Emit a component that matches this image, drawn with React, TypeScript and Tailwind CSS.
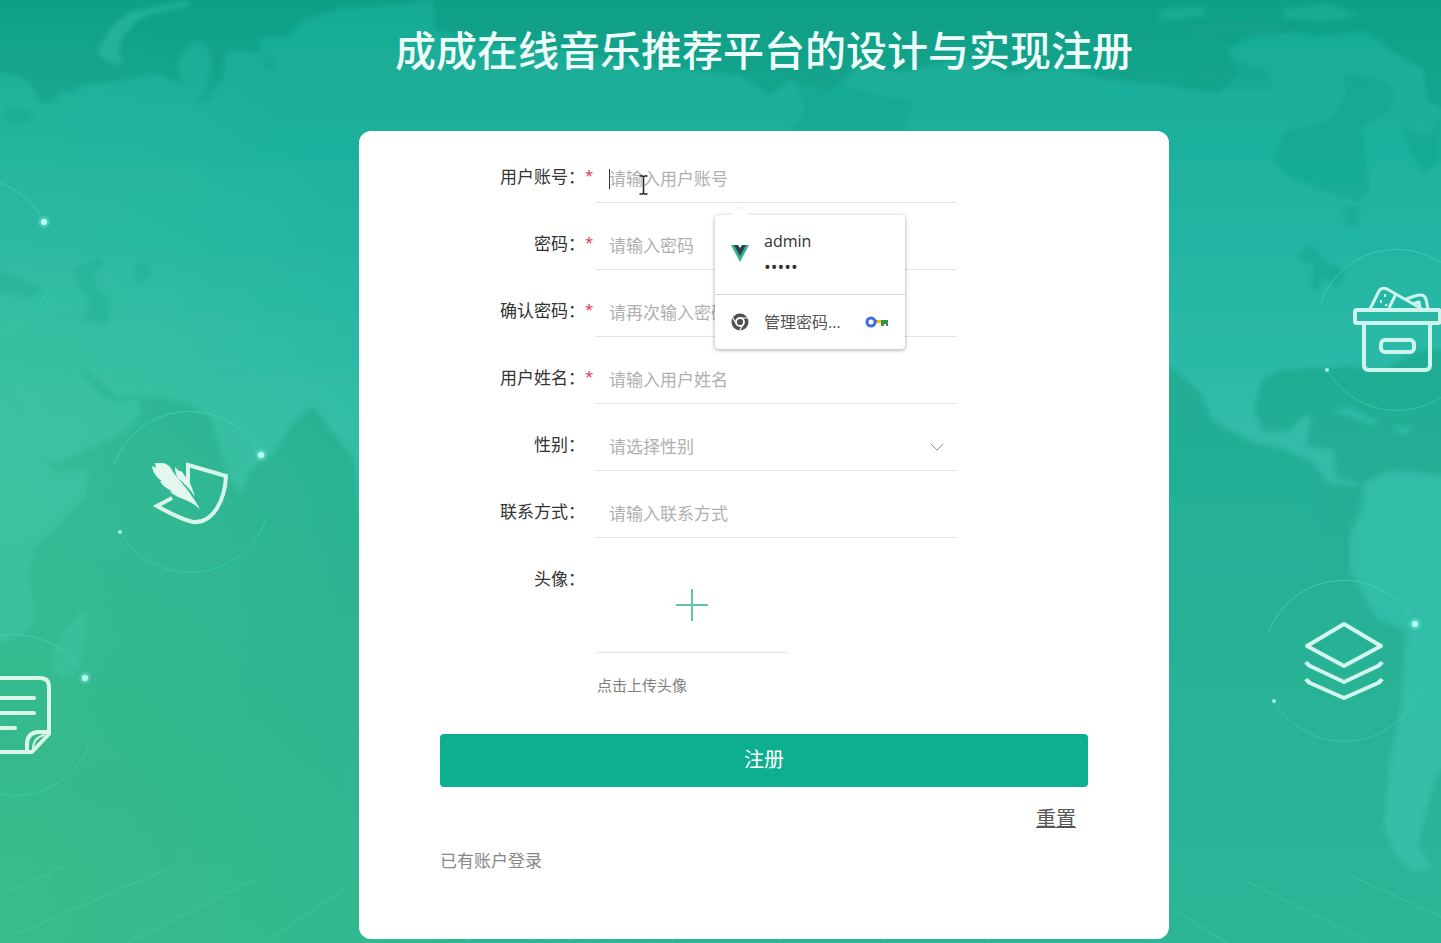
import { useState } from 'react'
import type { FormEvent } from 'react'
import { ChevronDown } from 'lucide-react'

type Field = {
  id: string
  label: string
  placeholder: string
  type: 'text' | 'password' | 'select'
  required?: boolean
  options?: string[]
}

const fields: Field[] = [
  { id: 'account', label: '用户账号', placeholder: '请输入用户账号', type: 'text', required: true },
  { id: 'password', label: '密码', placeholder: '请输入密码', type: 'password', required: true },
  { id: 'password2', label: '确认密码', placeholder: '请再次输入密码', type: 'password', required: true },
  { id: 'name', label: '用户姓名', placeholder: '请输入用户姓名', type: 'text', required: true },
  { id: 'gender', label: '性别', placeholder: '请选择性别', type: 'select', options: ['男', '女'] },
  { id: 'phone', label: '联系方式', placeholder: '请输入联系方式', type: 'text' },
]

const rings = [
  { cx: -27, cy: 259 },
  { cx: 190, cy: 492 },
  { cx: 14, cy: 715 },
  { cx: 1397, cy: 330 },
  { cx: 1344, cy: 661 },
]

function Ring({ cx, cy }: { cx: number; cy: number }) {
  return (
    <g transform={`translate(${cx} ${cy})`}>
      <path d="M-76 -28A81 81 0 0 1 67 -45" fill="none" stroke="#3fd6b4" strokeOpacity=".75" />
      <path d="M-70 40A81 81 0 0 0 76 28" fill="none" stroke="#34d3a2" strokeOpacity=".75" />
      <circle cx="71" cy="-37" r="7" fill="url(#glow)" />
      <circle cx="71" cy="-37" r="3" fill="#b9fff4" />
      <circle cx="-70" cy="40" r="2" fill="#9df7e2" />
    </g>
  )
}

// world map, rings and line icons behind the form
function Backdrop() {
  return (
    <svg
      aria-hidden="true"
      className="absolute inset-0 w-full h-full"
      viewBox="0 0 1441 943"
      preserveAspectRatio="xMidYMid slice"
    >
      <defs>
        <linearGradient id="sea" gradientUnits="userSpaceOnUse" x1="0" y1="0" x2="0" y2="943">
          <stop offset="0" stopColor="#0f9f87" />
          <stop offset=".15" stopColor="#17a68f" />
          <stop offset=".5" stopColor="#24af95" />
          <stop offset="1" stopColor="#2cb597" />
        </linearGradient>
        <linearGradient id="land" gradientUnits="userSpaceOnUse" x1="0" y1="0" x2="0" y2="943">
          <stop offset="0" stopColor="#17aa94" />
          <stop offset=".1" stopColor="#1caf9b" />
          <stop offset=".25" stopColor="#23b4a2" />
          <stop offset=".45" stopColor="#30bca9" />
          <stop offset="1" stopColor="#36c0a8" />
        </linearGradient>
        <radialGradient id="warm" gradientUnits="userSpaceOnUse" cx="0" cy="900" r="700">
          <stop offset="0" stopColor="#48c27c" stopOpacity=".5" />
          <stop offset="1" stopColor="#48c27c" stopOpacity="0" />
        </radialGradient>
        <radialGradient id="warmTop" gradientUnits="userSpaceOnUse" cx="0" cy="400" r="400">
          <stop offset="0" stopColor="#48cba0" stopOpacity=".4" />
          <stop offset="1" stopColor="#48cba0" stopOpacity="0" />
        </radialGradient>
        <radialGradient id="glow">
          <stop offset="0" stopColor="#8ffff0" stopOpacity=".7" />
          <stop offset="1" stopColor="#8ffff0" stopOpacity="0" />
        </radialGradient>
        <filter id="soft">
          <feGaussianBlur stdDeviation="2.5" />
        </filter>
      </defs>

      <rect width="1441" height="943" fill="url(#sea)" />

      <g filter="url(#soft)">
        <path
          fill="url(#land)"
          d="M-9 73L20 76L34 88L38 102L55 102L60 88L68 94L85 84L120 82L146 74L160 75L184 85L176 62L190 42L206 42L212 60L213 88L222 80L226 50L262 52L256 38L290 35L302 20L340 8L400 5L432 0L436 30L480 42L560 50L640 66L740 75L770 95L790 80L830 90L860 66L900 72L960 60L1010 74L1060 68L1100 78L1180 88L1180 540L362 540L354 460L332 432L313 406L292 424L272 455L250 470L240 494L226 470L212 420L190 404L165 398L140 396L118 396L104 384L92 376L84 368L78 368L92 384L106 398L118 402L138 398L140 414L124 432L58 464L46 456L10 392L-9 370Z"
        />
        <path fill="url(#land)" d="M-9 376L12 398L44 452L54 472L90 468L84 498L58 526L34 548L28 574L34 606L33 626L10 640L-9 652Z" />
        <path fill="url(#land)" fillOpacity=".8" d="M86 606L88 624L80 664L68 680L54 672L53 652L62 632Z" />
        <path fill="#29b89e" fillOpacity=".7" d="M110 64L96 52L112 26L130 12L170 4L190 0L188 6L156 13L138 20L122 38L118 52L124 64Z" />
        <path
          fill="url(#sea)"
          d="M1160 350L1200 392L1212 420L1252 442L1286 450L1312 462L1320 560L1160 560Z"
        />
        <path
          fill="url(#land)"
          d="M1150 82L1190 90L1220 92L1240 72L1226 50L1250 36L1290 32L1320 36L1368 32L1390 50L1424 70L1426 100L1450 112L1450 350L1420 350L1380 372L1352 366L1280 370L1262 380L1254 410L1264 432L1290 430L1306 414L1312 418L1306 446L1334 450L1336 478L1362 484L1390 470L1450 476L1450 760L1436 776L1426 812L1418 844L1432 868L1412 872L1394 852L1384 826L1390 760L1400 712L1406 630L1376 618L1350 570L1350 536L1362 508L1364 486L1330 484L1312 462L1286 450L1252 442L1212 420L1200 392L1150 350Z"
        />
        {/* lakes and inner seas */}
        <g fill="#12a189" fillOpacity=".45">
          <path d="M1344 74L1380 80L1396 94L1388 112L1362 126L1370 190L1358 202L1320 190L1290 178L1272 160L1284 132L1330 120L1346 96Z" />
          <path d="M1340 206L1358 206L1358 222L1350 228Z" />
          <path d="M1296 256L1312 244L1326 262L1346 270L1338 290L1324 276L1318 290L1310 292L1314 266Z" />
          <path d="M1400 128L1430 136L1441 110L1441 160L1424 174L1410 150Z" />
          <path d="M1170 30L1230 20L1300 26L1290 36L1230 30L1210 40Z" />
          <path d="M1190 76L1230 58L1270 72L1272 90L1230 88Z" />
          <path d="M790 66L840 84L880 96L914 100L904 134L790 134L806 110Z" />
          <path d="M206 84L214 44L224 40L218 84L208 104L196 102Z" />
          <path d="M262 58L274 56L274 72L266 70Z" />
          <path d="M72 270L100 256L104 266L92 276L100 292L110 296L108 324L84 322L88 300L76 282Z" />
          <path d="M136 264L148 262L150 274L142 284L134 276Z" />
          <path d="M-9 270L18 276L42 288L34 298L-9 292Z" />
          <path d="M4 108L30 110L32 120L18 126L6 120Z" />
        </g>
        <g fill="url(#land)">
          <path d="M1330 410L1350 408L1376 420L1378 426L1360 420Z" />
          <path d="M1392 426L1412 428L1404 436Z" />
        </g>
        <g fill="#1fb29c" fillOpacity=".6">
          <path d="M1160 10L1204 6L1206 16L1160 22Z" />
          <path d="M1284 8L1330 4L1360 16L1320 22L1284 18Z" />
        </g>
      </g>

      <rect width="1441" height="943" fill="url(#warm)" />
      <rect width="1441" height="943" fill="url(#warmTop)" />

      <g fill="none" stroke="#4bdba2" strokeOpacity=".45">
        <path d="M0 941L167 869M127 943L253 880M267 941L347 887M0 895L66 866" />
        <path d="M1170 907L1227 943M1243 879L1370 942M1347 874L1441 917" />
        <path d="M466 943L470 937M568 943L572 937M673 943V937M780 943V937M886 943L882 937M990 943L986 937" />
      </g>

      {rings.map(r => <Ring key={`${r.cx}-${r.cy}`} cx={r.cx} cy={r.cy} />)}

      {/* quill on a page */}
      <g>
        <path
          d="M188 483L188 465L226 476C225 500 213 524 193 522C180 519 168 512 157 506L172 498"
          fill="none"
          stroke="#d8f5e9"
          strokeWidth="4"
        />
        <path
          d="M200 509C193 503 188 501 183 499C178 497 174 495 170 492L172 491C167 489 162 485 160 481L162 481C157 478 153 473 152 466L156 468L155 463L163 463C168 464 171 467 173 472C180 481 190 491 200 509Z"
          fill="#e2f8ef"
        />
        <path d="M195 497C190 489 184 483 178 478C176 475 175 472 175 467L179 471L181 471C184 474 185 476 186 478L187 478C191 484 193 490 195 497Z" fill="#e2f8ef" />
      </g>

      {/* note with folded corner */}
      <g fill="none" stroke="#d8f7e6" strokeWidth="4" strokeLinecap="round" strokeLinejoin="round">
        <path d="M-10 678H40Q49 678 49 687V734L32 752H-10" />
        <path d="M-10 698H34M-10 713H34M-10 728H15" />
        <path d="M48 732H38Q27 733 27 744V751" />
        <path d="M33 749Q33 738 44 735" strokeWidth="2" />
      </g>

      {/* archive box */}
      <g fill="none" stroke="#cdf5ee" strokeWidth="4" strokeLinejoin="round">
        <rect x="1355" y="310" width="85" height="13" rx="2" />
        <path d="M1364 324V365Q1364 370 1369 370H1425Q1430 370 1430 365V324" />
        <rect x="1381" y="340" width="33" height="12" rx="4" />
        <path d="M1370 309L1379 291Q1382 287 1387 289L1422 309M1389 308L1396 294" strokeWidth="3" />
        <path d="M1406 299L1415 296Q1424 293 1426 299L1428 309M1413 304L1419 302L1420 308" strokeWidth="3" />
        <path d="M1385 294v3M1381 300v3M1386 304v2" strokeWidth="2" />
      </g>

      {/* layers */}
      <g fill="none" stroke="#d2f6ee" strokeWidth="4" strokeLinejoin="round">
        <path d="M1344 624L1381 646L1344 666L1307 646Z" />
        <path d="M1306 662Q1307 664 1310 666L1344 682L1378 666Q1381 664 1382 662" />
        <path d="M1306 679Q1307 681 1310 683L1344 698L1378 683Q1381 681 1382 679" />
      </g>
    </svg>
  )
}

function VueLogo() {
  return (
    <svg width="18" height="18" viewBox="0 0 18 18" aria-hidden="true">
      <path d="M0 0H4L9 8L14 0H18L9 17Z" fill="#35b48a" />
      <path d="M3 0H7L9 3L11 0H15L9 11Z" fill="#2b4055" />
    </svg>
  )
}

function ChromeLogo() {
  return (
    <svg width="18" height="18" viewBox="0 0 18 18" aria-hidden="true">
      <circle cx="9" cy="9" r="8.500" fill="#505050" />
      <path d="M9 5H17M5.500 11L1.500 4.500M12.500 11L8.500 17.500" stroke="#fff" strokeWidth="1.200" />
      <circle cx="9" cy="9" r="4" fill="#505050" stroke="#fff" strokeWidth="1.800" />
    </svg>
  )
}

function KeyLogo() {
  return (
    <svg width="24" height="12" viewBox="0 0 24 12" aria-hidden="true">
      <path d="M9 4H12V7H9Z" fill="#ea4335" />
      <path d="M12 4H17V7H12Z" fill="#fbbc04" />
      <path d="M16 4H23V10H21V8H19V10H16Z" fill="#34934a" />
      <circle cx="6" cy="6" r="4" fill="#fff" stroke="#3b6fe0" strokeWidth="3" />
    </svg>
  )
}

function PasswordPopup() {
  return (
    <div className="absolute left-[120px] top-[60px] z-10 w-[190px] rounded bg-white shadow-[0_1px_4px_rgba(0,0,0,0.35)]">
      <svg className="absolute -top-2 left-[15px]" width="20" height="9" viewBox="0 0 20 9" aria-hidden="true">
        <path d="M0 9L8 1Q10 0 12 1L20 9Z" fill="#fff" stroke="#f0f0f0" />
        <path d="M1 9H19" stroke="#fff" strokeWidth="2" />
      </svg>
      <button type="button" className="flex h-20 w-full items-center gap-[15px] border-b border-[#d4d4d4] pb-0.5 pl-4 text-left">
        <VueLogo />
        <span className="flex flex-col text-[#333]">
          <span className="text-base leading-[26px]">admin</span>
          <span className="text-lg leading-[26px]">•••••</span>
        </span>
      </button>
      <button type="button" className="flex h-[54px] w-full items-center gap-[15px] pl-4 pr-4 text-left">
        <ChromeLogo />
        <span className="flex-1 text-base text-[#555]">管理密码...</span>
        <KeyLogo />
      </button>
    </div>
  )
}

function TextCursor() {
  return (
    <svg className="absolute left-11 top-5 pointer-events-none" width="9" height="20" viewBox="0 0 9 20" aria-hidden="true">
      <path d="M0.500 1H3.500L4.500 2L5.500 1H8.500M4.500 2V18M0.500 19H3.500L4.500 18L5.500 19H8.500" fill="none" stroke="#222" strokeWidth="1.500" />
    </svg>
  )
}

const control = 'block h-12 w-full border-b border-[#e4e4e4] bg-transparent px-3.5 text-[17px] outline-none'

export default function App() {
  const [values, setValues] = useState<Record<string, string>>({})

  const update = (id: string, value: string) => setValues(prev => ({ ...prev, [id]: value }))
  const submit = (e: FormEvent) => e.preventDefault()

  return (
    <div className="relative min-h-screen overflow-hidden bg-[#22ad94] font-['Open_Sans','Noto_Sans_CJK_SC',sans-serif]" lang="zh-CN">
      <Backdrop />
      <main className="relative flex flex-col items-center pb-1 pl-[87px]">
        <h1 className="pt-[22px] pb-[53px] text-[41px] leading-[56px] font-medium text-[#effdfa]">成成在线音乐推荐平台的设计与实现注册</h1>

        <form
          onSubmit={submit}
          onReset={() => setValues({})}
          className="w-full max-w-[810px] rounded-xl bg-white px-[81px] pt-6 pb-16"
        >
          {fields.map(f => (
            <div key={f.id} className="mb-[19px] flex">
              <label htmlFor={f.id} className="w-[145px] text-right text-[17px] leading-[44px] text-[#333]">
                {f.label}：
              </label>
              <span className="w-2.5 text-[15px] leading-10 text-[#e0304e]">{f.required ? '*' : ''}</span>
              <div className="relative w-[362px]">
                {f.type === 'select' ? (
                  <>
                    <select
                      id={f.id}
                      value={values[f.id] ?? ''}
                      onChange={e => update(f.id, e.target.value)}
                      className={`${control} appearance-none text-[#b0b0b0]`}
                    >
                      <option value="">{f.placeholder}</option>
                      {f.options?.map(o => <option key={o}>{o}</option>)}
                    </select>
                    <ChevronDown
                      size={24}
                      strokeWidth={1}
                      className="pointer-events-none absolute right-2 top-3 text-[#909090]"
                    />
                  </>
                ) : (
                  <input
                    id={f.id}
                    type={f.type}
                    placeholder={f.placeholder}
                    value={values[f.id] ?? ''}
                    onChange={e => update(f.id, e.target.value)}
                    className={`${control} text-[#333] placeholder:text-[#b0b0b0]`}
                  />
                )}
                {f.id === 'account' && (
                  <>
                    <span className="absolute left-3.5 top-3.5 h-5 w-px bg-[#333]" />
                    <TextCursor />
                    <PasswordPopup />
                  </>
                )}
              </div>
            </div>
          ))}

          <div className="flex">
            <label htmlFor="avatar" className="w-[145px] text-right text-[17px] leading-[44px] text-[#333]">
              头像：
            </label>
            <div className="ml-3">
              <label
                htmlFor="avatar"
                className="flex h-24 w-[190px] cursor-pointer items-center justify-center border-b border-[#e0e0e0]"
              >
                <svg width="32" height="32" viewBox="0 0 32 32" aria-label="上传">
                  <path d="M16 0V32M0 16H32" stroke="#62c4ab" strokeWidth="2" />
                </svg>
              </label>
              <input id="avatar" type="file" accept="image/*" className="sr-only" />
              <p className="mt-5 text-[15px] leading-6 text-[#808080]">点击上传头像</p>
            </div>
          </div>

          <button type="submit" className="mt-[37px] h-[53px] w-full rounded bg-[#0eaf90] pb-0.5 text-xl text-white">
            注册
          </button>
          <div className="mt-[18px] flex justify-end pr-3">
            <button type="reset" className="text-xl leading-7 text-[#555] underline decoration-1">重置</button>
          </div>
          <a href="#login" className="mt-3.5 block w-fit text-[17px] leading-7 text-[#888]">已有账户登录</a>
        </form>
      </main>
    </div>
  )
}
